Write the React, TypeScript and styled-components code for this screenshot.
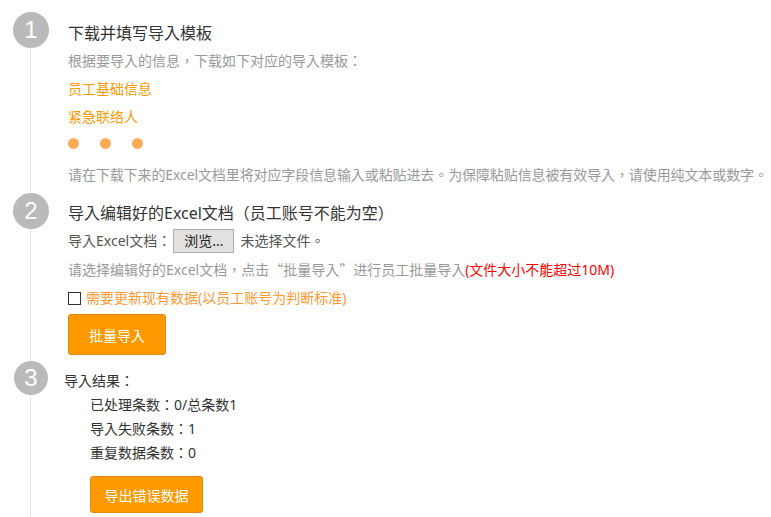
import styled, { createGlobalStyle } from "styled-components";

const GlobalStyle = createGlobalStyle`
    body {
        margin: 0;
        background: #fff;
        font-family: "Noto Sans", "Noto Sans CJK TC", "Noto Sans CJK SC", sans-serif;
        color: #333;
    }
`;

const App = () => {
    return (
        <>
            <GlobalStyle/>
            <Timeline>
                <Step $gap={0}>
                    <Marker><Circle $size={36}>1</Circle></Marker>
                    <Content $indent={6} $top={7}>
                        <Title>下载并填写导入模板</Title>
                        <Hint>根据要导入的信息，下载如下对应的导入模板：</Hint>
                        <TemplateLink>员工基础信息</TemplateLink>
                        <TemplateLink>紧急联络人</TemplateLink>
                        <Dots>
                            <Dot/>
                            <Dot/>
                            <Dot/>
                        </Dots>
                        <Hint $wide>请在下载下来的Excel文档里将对应字段信息输入或粘贴进去。为保障粘贴信息被有效导入，请使用纯文本或数字。</Hint>
                    </Content>
                </Step>

                <Step $gap={4}>
                    <Marker><Circle $size={36}>2</Circle></Marker>
                    <Content $indent={6} $top={6}>
                        <Title>导入编辑好的Excel文档（员工账号不能为空）</Title>
                        <FileRow>
                            导入Excel文档：
                            <BrowseButton type="button">浏览...</BrowseButton>
                            <span>未选择文件。</span>
                        </FileRow>
                        <Hint>
                            请选择编辑好的Excel文档，点击<Quote>“</Quote>批量导入<Quote>”</Quote>进行员工批量导入<Warn>(文件大小不能超过10M)</Warn>
                        </Hint>
                        <CheckRow>
                            <Check type="checkbox"/>
                            需要更新现有数据(以员工账号为判断标准)
                        </CheckRow>
                        <ActionButton $width={98} $height={41} $top={2}>批量导入</ActionButton>
                    </Content>
                </Step>

                <Step $gap={6}>
                    <Marker><Circle $size={34}>3</Circle></Marker>
                    <Content $indent={2} $top={8}>
                        <ResultTitle>导入结果：</ResultTitle>
                        <ResultList>
                            <ResultItem>已处理条数：0/总条数1</ResultItem>
                            <ResultItem>导入失败条数：1</ResultItem>
                            <ResultItem>重复数据条数：0</ResultItem>
                            <ActionButton $width={113} $height={37} $top={11}>导出错误数据</ActionButton>
                        </ResultList>
                    </Content>
                </Step>
            </Timeline>
        </>
    );
};

export default App;

const Timeline = styled.div`
    display: flex;
    flex-direction: column;
    padding-top: 12px;
    min-height: 505px;
    background: linear-gradient(#e6e6e6, #e6e6e6) no-repeat 30px 30px / 1px 100%;
`
const Step = styled.section<{ $gap: number }>`
    display: flex;
    align-items: flex-start;
    margin-top: ${p => p.$gap}px;
`
const Marker = styled.div`
    width: 62px;
    flex-shrink: 0;
    display: flex;
    justify-content: center;
`
const Circle = styled.div<{ $size: number }>`
    width: ${p => p.$size}px;
    height: ${p => p.$size}px;
    border-radius: 50%;
    background: #bababa;
    color: #fff;
    font-family: "Liberation Sans", Arial, sans-serif;
    font-size: 24px;
    line-height: ${p => p.$size}px;
    text-align: center;
`
const Content = styled.div<{ $indent: number; $top: number }>`
    display: flex;
    flex-direction: column;
    align-items: flex-start;
    min-width: 0;
    padding-left: ${p => p.$indent}px;
    padding-top: ${p => p.$top}px;
    font-size: 14px;
    line-height: 28px;
`
const Title = styled.h2`
    margin: 0;
    font-size: 16px;
    font-weight: normal;
    line-height: 28px;
    color: #333;
    white-space: nowrap;
`
const Hint = styled.p<{ $wide?: boolean }>`
    margin: ${p => p.$wide ? "12px 0 0" : "0"};
    color: #999;
    white-space: nowrap;
    letter-spacing: ${p => p.$wide ? "-0.1px" : "0"};
`
const Quote = styled.span`
    font-family: "Noto Sans CJK SC", sans-serif;
    display: inline-block;
    width: 14px;
    text-align: center;
`
const TemplateLink = styled.a`
    color: #ff9900;
    cursor: pointer;
`
const Dots = styled.div`
    display: flex;
    gap: 21px;
    margin-top: 7px;
`
const Dot = styled.span`
    width: 11px;
    height: 11px;
    border-radius: 50%;
    background: #ffab57;
`
const FileRow = styled.div`
    display: flex;
    align-items: center;
    height: 28px;
    color: #555;
`
const BrowseButton = styled.button`
    height: 24px;
    padding: 0 10px;
    margin: 0 6px 0 2px;
    border: 1px solid #adadad;
    background: #e1e1e1;
    color: #222;
    font-family: inherit;
    font-size: 14px;
    line-height: 20px;
`
const Warn = styled.span`
    color: #ff0000;
`
const CheckRow = styled.label`
    display: flex;
    align-items: center;
    gap: 5px;
    color: #ff9933;
    white-space: nowrap;
`
const Check = styled.input`
    appearance: none;
    margin: 0;
    width: 13px;
    height: 13px;
    border: 1px solid #333;
    background: #fff;
`
const ActionButton = styled.button<{ $width: number; $height: number; $top: number }>`
    width: ${p => p.$width}px;
    height: ${p => p.$height}px;
    margin-top: ${p => p.$top}px;
    background: #ff9900;
    border: 1px solid #e3880c;
    border-radius: 3px;
    color: #fff;
    font-family: inherit;
    font-size: 14px;
    cursor: pointer;
`
const ResultTitle = styled.h3`
    margin: 0;
    font-size: 14px;
    font-weight: normal;
    line-height: 24px;
    color: #333;
`
const ResultList = styled.div`
    display: flex;
    flex-direction: column;
    align-items: flex-start;
    padding-left: 26px;
`
const ResultItem = styled.div`
    line-height: 24px;
    color: #333;
`
